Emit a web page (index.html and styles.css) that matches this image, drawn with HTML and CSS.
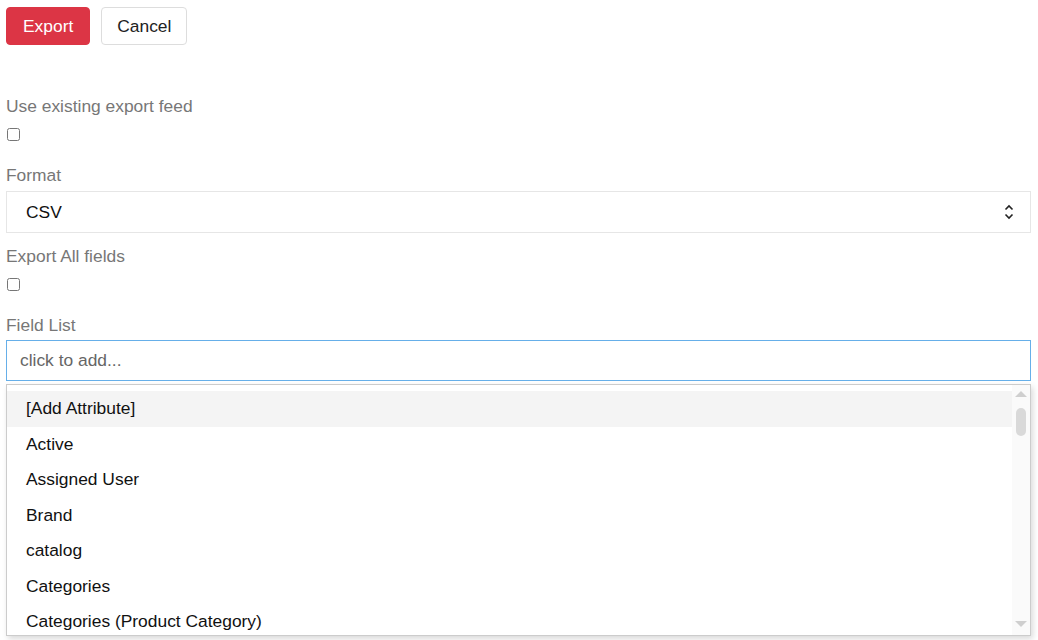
FILE: index.html
```html
<html>

<head>
    <meta charset="UTF-8">
    <meta name="viewport" content="width=device-width, initial-scale=1.0">
    <title>Export</title>

    <link rel="stylesheet" href="styles.css">
</head>

<body>
    <form class="export-form">
        <div class="actions">
            <button type="button" class="btn btn-danger">Export</button>
            <button type="button" class="btn btn-default">Cancel</button>
        </div>

        <div class="field field-first">
            <label for="use-feed">Use existing export feed</label>
            <input type="checkbox" id="use-feed" class="check" />
        </div>

        <div class="field">
            <label for="format">Format</label>
            <div class="select">
                <span>CSV</span>
                <svg class="select-arrows" width="10" height="16" viewBox="0 0 10 16">
                    <path d="M1.5 5.5 L5 2 L8.5 5.5 M1.5 10.5 L5 14 L8.5 10.5" fill="none" stroke="#222" stroke-width="1.6" />
                </svg>
            </div>
        </div>

        <div class="field">
            <label for="all-fields">Export All fields</label>
            <input type="checkbox" id="all-fields" class="check" />
        </div>

        <div class="field">
            <label for="field-list">Field List</label>
            <input type="text" id="field-list" class="input input-active" placeholder="click to add..." />

            <div class="dropdown">
                <ul class="options">
                    <li class="option hover">[Add Attribute]</li>
                    <li class="option">Active</li>
                    <li class="option">Assigned User</li>
                    <li class="option">Brand</li>
                    <li class="option">catalog</li>
                    <li class="option">Categories</li>
                    <li class="option">Categories (Product Category)</li>
                </ul>
                <div class="scrollbar">
                    <span class="arrow-up"></span>
                    <span class="thumb"></span>
                    <span class="arrow-down"></span>
                </div>
            </div>
        </div>
    </form>
</body>

</html>
```

FILE: styles.css
```css
:root {
    --danger: #dc3545;
    --label-color: #777;
    --border-light: #e6e6e6;
    --focus-color: #66afe9;
}

body {
    margin: 0;
    background: white;
    font-family: "Liberation Sans", Arial, sans-serif;
    font-size: 17.4px;
    color: #111;
    overflow: hidden;
}

.export-form {
    padding: 7px 7px 0 6px;
}

.actions {
    display: flex;
    gap: 11px;
}

.btn {
    height: 38px;
    padding: 0 15px;
    border-radius: 4px;
    font-family: inherit;
    font-size: 17.4px;
    cursor: pointer;
}

.btn-danger {
    padding: 0 16px;
    background: var(--danger);
    border: 1px solid var(--danger);
    color: white;
}

.btn-default {
    background: white;
    border: 1px solid #ddd;
    color: #222;
}

.field {
    display: flex;
    flex-direction: column;
    align-items: stretch;
    margin-top: 10px;
}

.field-first {
    margin-top: 48px;
}

label {
    display: block;
    line-height: 26px;
    color: var(--label-color);
}

.check {
    width: 13px;
    height: 13px;
    margin: 9px 0 11px 1px;
    align-self: flex-start;
}

.select {
    display: flex;
    align-items: center;
    justify-content: space-between;
    height: 42px;
    margin-top: 3px;
    padding: 0 16px 0 19px;
    border: 1px solid var(--border-light);
    box-sizing: border-box;
    color: #111;
}

.input {
    height: 41px;
    margin-top: 2px;
    padding: 0 13px;
    border: 1px solid #ccc;
    box-sizing: border-box;
    font-family: inherit;
    font-size: 17.4px;
    color: #111;
    outline: none;
}

.input::placeholder {
    color: #666;
}

.input-active {
    border-color: var(--focus-color);
}

.dropdown {
    display: flex;
    height: 252px;
    margin-top: 3px;
    border: 1px solid #ccc;
    box-sizing: border-box;
    box-shadow: 2px 3px 6px rgba(0, 0, 0, 0.15);
    background: white;
    overflow: hidden;
}

.options {
    flex: 1;
    list-style: none;
    margin: 0;
    padding: 6px 0 0 0;
}

.option {
    height: 35.5px;
    line-height: 35.5px;
    padding-left: 19px;
    white-space: nowrap;
}

.option.hover {
    background: #f4f4f4;
}

.scrollbar {
    position: relative;
    width: 18px;
    background: #fafafa;
}

.arrow-up,
.arrow-down {
    position: absolute;
    left: 3px;
    width: 0;
    height: 0;
    border-left: 6px solid transparent;
    border-right: 6px solid transparent;
}

.arrow-up {
    top: 6px;
    border-bottom: 6px solid #cfcfcf;
}

.arrow-down {
    bottom: 8px;
    border-top: 6px solid #cfcfcf;
}

.thumb {
    position: absolute;
    top: 23px;
    left: 4px;
    width: 10px;
    height: 28px;
    border-radius: 5px;
    background: #d9d9d9;
}
```
